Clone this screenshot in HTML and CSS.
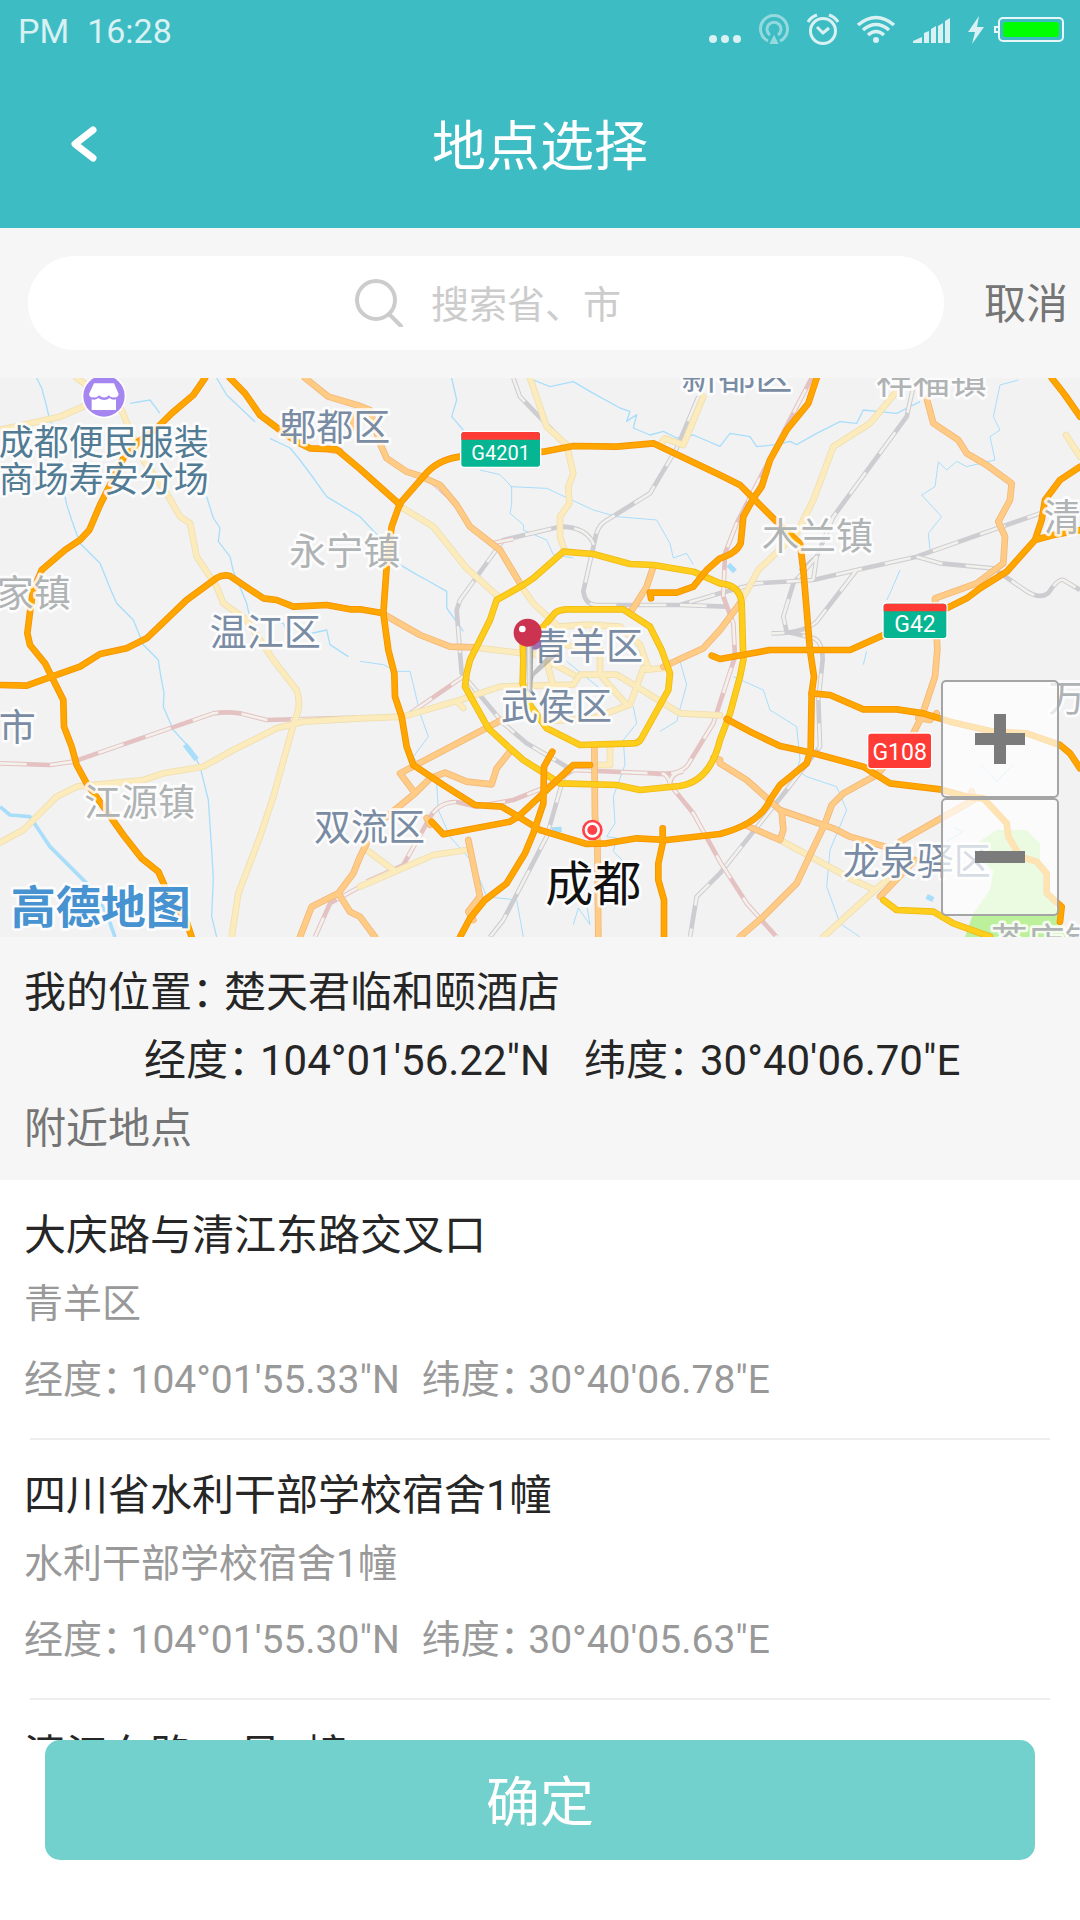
FILE: index.html
```html
<!DOCTYPE html>
<html lang="zh-CN">
<head>
<meta charset="utf-8">
<meta name="viewport" content="width=device-width, initial-scale=1">
<title>地点选择</title>
<link rel="stylesheet" href="styles.css">
</head>
<body>
<div class="app">
  <header class="header">
    <div class="status">
      <div class="status-time"><span>PM</span><span>16:28</span></div>
      <svg class="status-icons" viewBox="706 10 360 40" aria-hidden="true">
        <g fill="#d9f1f3">
          <circle cx="713" cy="39" r="4"/><circle cx="725" cy="39" r="4"/><circle cx="737" cy="39" r="4"/>
          <circle cx="876" cy="40" r="3"/>
          <path d="M913 43v-2l9-4v6zM924 43V33l5-2v12zM931 43V29l5-3v17zM938 43V26l5-3v20zM945 43V21l5-3v25zM979 16l-11 16h7l-3 12 12-17h-7z"/>
        </g>
        <g fill="none" stroke="#d9f1f3" stroke-width="3">
          <g opacity=".55"><path d="M768 41a13.500 13.500 0 1 1 12 0M770 35a7 7 0 1 1 8 0"/><path d="M774 37l3 6h-6z" fill="#d9f1f3" stroke-width="2"/></g>
          <circle cx="823" cy="31" r="12.500"/><path d="M817 27l6 6 6-5M808 22q3-5 9-7M829 15q6 2 9 7"/>
          <path stroke-width="3.500" d="M858 25q18-15 36 0M863 30q13-11 26 0M868 35q8-7 16 0"/>
        </g>
        <rect x="999" y="18" width="64" height="23" rx="4" fill="none" stroke="#e8f7f8" stroke-width="2"/>
        <path d="M998 27h-3v5h3" fill="none" stroke="#e8f7f8" stroke-width="2"/>
        <rect x="1003" y="22" width="56" height="15" rx="3" fill="#0f0"/>
      </svg>
    </div>
    <div class="nav">
      <button class="back" type="button" aria-label="返回"><svg viewBox="0 0 26 36" aria-hidden="true"><path d="M22 4L4 18l18 14" fill="none" stroke="#fff" stroke-width="7" stroke-linecap="round" stroke-linejoin="round"/></svg></button>
      <h1 class="title">地点选择</h1>
    </div>
  </header>

  <form class="search" role="search">
    <label class="search-box">
      <svg class="search-icon" viewBox="0 0 48 48" aria-hidden="true"><circle cx="21" cy="21" r="19" fill="none" stroke="#ccc" stroke-width="4"/><path d="M34 35l12 12" stroke="#ccc" stroke-width="4" stroke-linecap="round"/></svg>
      <input class="search-input" type="text" placeholder="搜索省、市" aria-label="搜索省、市">
    </label>
    <button class="cancel" type="button">取消</button>
  </form>

  <div class="map">
    <svg class="map-art" viewBox="0 0 3240 1677" preserveAspectRatio="xMidYMid slice" role="img" aria-label="成都地图">
      <defs>
        <linearGradient id="stem"><stop offset="0" stop-color="#aaa"/><stop offset=".4" stop-color="#eee"/><stop offset="1" stop-color="#888"/></linearGradient>
        <g id="rail-grey">
          <path d="M1540 0L1560 56L1690 191M2095 56L2030 211L1950 346L1815 430Q1790 446 1784 490L1750 640Q1755 681 1790 681L2040 681L2160 646L2270 616L2440 606L2570 576L2750 536L3120 406M2040 681L2180 686"/>
          <path d="M1782 500Q1760 446 1680 446L1510 486L1380 666L1370 696L1385 886L1510 1036L1580 1096L1700 1166L1640 1376L1510 1626L1470 1677"/>
          <path d="M2740 26L2720 116L2500 416L2450 536L2380 616L2350 716L2360 761L2440 780Q2468 790 2468 846L2455 966L2460 1106L2360 1236L2260 1361L2160 1486L2090 1556L2070 1677M2440 606L2450 536L2400 580"/>
          <path d="M2570 576L2450 731Q2410 766 2315 766M2750 536L2820 556L2980 571L3080 640Q3120 665 3145 645Q3175 600 3190 606L3240 636"/>
        </g>
        <g id="rail-pink">
          <path d="M0 1156L150 1161L220 1151L640 1006Q680 1000 720 1006L800 1026L1080 1019M1230 1006L1390 896M1480 495L1540 483M1300 315L1350 360"/>
          <path d="M1100 1511L1210 1461L1280 1336Q1310 1270 1370 1272L1430 1286L1540 1266L1640 1226L1720 1176L1960 1186Q2050 1195 2070 1150L2140 1036L2205 836L2200 736L2170 656L2175 526L2210 436L2390 86L2435 0"/>
          <path d="M1985 1186Q2005 1190 2010 1220L2080 1306L2160 1451L2240 1576L2330 1677M2050 1180Q2010 1185 2010 1220M1080 1526L990 1576L945 1677"/>
        </g>
        <g id="roads-cream">
          <path d="M0 156L180 116L250 86M230 0L260 21M365 96L385 146L430 246L500 346L540 416L570 436L590 536L650 626L670 676L740 726L820 846L890 936Q900 966 895 996L880 1041L820 1256L780 1376L715 1546L695 1677"/>
          <path d="M0 1394L70 1356L170 1256L230 1226L430 1206L490 1186L610 1166L700 1116L830 1051L910 1031L1080 1021L1210 1016L1380 966L1500 926L1720 920L1740 890L1850 890L1900 920L2040 1006L2160 1012"/>
          <path d="M1210 391L1300 446L1400 571L1495 656M1590 0L1640 146L1700 201L1720 286L1705 326L1708 376L1680 416L1680 476L1695 521M1565 626L1600 676L1675 746L1760 740L1860 746L1920 800L1945 870M1420 808L1570 826"/>
          <path d="M2110 56L2050 201L1995 181L1980 201M2685 46L2610 136L2500 206L2440 366L2390 466L2275 576L2220 676M3198 171L3240 236M1100 1416L1180 1476M1080 1526L1300 1431L1400 1416M2340 1386L2560 1506L2625 1536L2660 1506M2625 1536L2470 1677"/>
          <path d="M1800 816L1800 890L1880 980M1930 870L1890 980L1780 1020L1640 1030M1640 850L1660 925M1600 826L1720 890M1830 1110L1830 1161L1790 1161M1650 790L1740 810L1800 740M1940 875L1995 870M1370 970L1390 990"/>
        </g>
        <g id="roads-light">
          <path d="M915 0L985 56L1080 84L1110 96L1140 196L1160 241L1220 281L1260 294L1320 321L1370 381L1410 446L1500 516L1560 616M1155 711L1260 771L1350 806L1420 808M1960 566L1940 626L1890 706M2220 676L2160 756L2110 811L2040 843L1990 866"/>
          <path d="M1505 1026L1200 1186L1245 1246L1160 1316M1245 1246L1290 1201L1335 1184L1400 1211L1475 1219L1490 1171L1530 1121M1783 1106L1785 1316L1792 1376L1795 1677M1405 1386L1440 1556L1405 1601L1420 1626M1100 1396L1080 1436L1060 1486L1015 1546L935 1586L900 1677M1015 1546L1050 1601L1080 1616L1125 1677M1280 1320L1290 1340"/>
          <path d="M2780 61L2800 136L2875 186L2900 226L2960 261L3035 316L3030 366L2995 431L3015 476L3010 556L2930 616L2805 661L2812 816L2805 896L2765 1016L2740 1066L2630 1191L2530 1246L2495 1281L2475 1336L2390 1516L2290 1616L2220 1676"/>
          <path d="M2160 1156L2240 1206L2340 1296L2500 1351L2550 1376L2655 1406M2235 1341L2340 1386L2350 1356L2345 1301M2640 1556L2745 1446M2700 1391L2920 1266L2915 1240M2755 1020L2790 1026L2810 1006M1060 110L1060 150M990 215L1020 220M2160 1146L2140 1140"/>
        </g>
        <g id="roads-yellow">
          <path d="M1690 521L1780 528L1890 558L1960 561L2080 581L2160 616Q2220 620 2225 676L2230 846L2220 896L2190 1006L2160 1086Q2130 1210 2040 1224L1920 1236L1850 1221L1680 1216L1570 1146L1530 1111L1465 1051L1395 926L1400 886L1410 846L1470 726L1490 666L1570 621L1600 601Z"/>
          <path d="M1570 846L1568 790L1630 746L1665 705Q1675 696 1700 694L1870 694L1950 746L1985 816L2010 886L2005 936L1925 1080Q1917 1096 1900 1096L1740 1101L1640 1051L1590 981L1568 916ZM2650 1566L2690 1596L2800 1601L2860 1636L2970 1676"/>
        </g>
        <g id="roads-orange">
          <path d="M615 0L580 51L515 106L470 151L415 191L370 241L330 321L300 381L268 456L240 486L195 516L125 576L100 636L92 686L82 766L90 801L135 856L155 896L190 966L192 1046L215 1106L230 1161L260 1216L310 1286L370 1371L425 1441L475 1481L495 1526L515 1576L555 1616L575 1677"/>
          <path d="M0 921L80 923L155 896L240 866L300 828L380 811L440 781L560 666L650 600Q670 588 690 594L790 661L830 666L880 686L980 681L1050 694L1080 694L1150 706M690 0L735 46L780 111L840 156L890 191L930 211L1010 214L1080 273L1200 380"/>
          <path d="M1200 376L1270 296Q1310 245 1380 236L1500 234L1630 221L1720 204L1850 206L1960 196L2160 291L2220 321L2260 361L2330 431L2400 496L2410 576L2430 816L2442 896L2435 946L2432 1116L2420 1156L2340 1221L2310 1266Q2280 1336 2160 1368L2000 1386L1910 1381L1820 1396L1760 1398L1620 1356L1555 1316L1505 1286L1425 1281L1330 1221L1240 1161L1220 1106L1205 1016L1185 956L1183 886L1165 816L1150 706L1160 566L1175 446Z"/>
          <path d="M2450 0L2425 76L2360 156L2310 246L2285 326L2260 361L2230 416L2222 496Q2210 526 2160 541L2120 576L2080 626L2030 644L1950 644L1953 661M3155 0L3195 51L3240 116"/>
          <path d="M3240 266L3180 306L3135 366L3125 426L3105 486L3060 536L3020 581L2940 631L2900 661L2840 691L2640 776L2550 816L2310 816L2160 843L2135 833M3105 486L3160 471L3240 456"/>
          <path d="M2435 946L2490 951L2590 994L2690 994L2770 1006L2850 1031L2980 1061L3080 1066L3180 1101L3210 1126L3240 1171M2180 1023L2260 1066L2340 1104L2435 1124L2590 1166L2670 1216L2820 1234L2900 1256L2950 1261L3020 1336L3025 1376L3060 1436L3110 1451L3140 1486L3140 1546L3185 1586L3180 1631"/>
          <path d="M1657 1121L1632 1166L1630 1276L1600 1366L1575 1426L1520 1516L1455 1566L1410 1621L1380 1677M1770 1161L1720 1161L1555 1316L1530 1331L1330 1369L1295 1331M1988 1351L1988 1396L1975 1456L1975 1506L1992 1566L1992 1677"/>
        </g>
      </defs>

      <rect width="3240" height="1677" fill="#f2f2f3"/>
      <path d="M2930 1396L2990 1356L3080 1356L3120 1396L3120 1456L3170 1596L3200 1677L2895 1677L2920 1606L2970 1536L2980 1480L2940 1440Z" fill="#bdf09b"/>

      <g fill="none" stroke="#a9defb" stroke-width="4" stroke-linejoin="round">
        <path d="M110 0L125 30L140 86L150 130L172 156L180 276L200 380L215 426L240 496L300 556L330 630L350 676L400 726L430 800L475 846L480 880L492 946L490 986L520 1056L575 1116L600 1166L625 1266L635 1416L640 1500L635 1616L650 1677"/>
        <path d="M650 0L680 51L765 131M810 181L870 210L900 246L940 300L980 356L1080 416L1160 500L1200 560L1250 590L1280 606L1340 640L1340 690L1390 760M390 76L450 66L480 106M620 356L640 420L660 450L655 490L690 536L700 580L740 676L750 720L850 736L870 780L980 756L990 800L1045 836"/>
        <path d="M1355 0L1370 66L1355 116L1390 156M1600 6L1650 26L1720 11L1780 46L1860 90L1890 100L1880 130L1910 110L1900 150L1950 171L1990 160L2030 180L2080 171L2160 205L2190 166L2250 176L2270 206L2330 200L2370 190L2390 200L2450 166L2520 131L2570 136L2590 96L2690 106L2760 71"/>
        <path d="M1440 276L1500 290L1535 326L1535 380L1530 406L1570 440L1570 456L1640 486L1660 530L1720 540M1530 326L1640 331L1780 396L1850 416L1970 426L2010 496L2020 540L2060 526L2080 560M3055 6L3000 21L2980 116L3000 156L2970 176L2985 246L2900 266L2870 250L2840 276L2815 251L2805 326L2765 351L2825 416L2785 466L2790 516M2700 576L2670 646L2660 666" stroke-width="3"/>
        <path d="M1700 850L1810 940L1860 950L1900 986L1910 1036L1870 1086L1875 1160L1840 1256L1845 1336L1820 1376L1850 1380L1840 1420L1870 1450M1080 850L1150 860L1190 880L1230 880L1240 920L1260 1006L1285 1076L1240 1136L1270 1180L1310 1216L1315 1296L1350 1376L1420 1456L1460 1556L1550 1566L1570 1677M1720 1640L1735 1590L1770 1640L1760 1580L1810 1540M2040 850L2060 920L2030 1030L1980 1060" stroke-width="3"/>
        <path d="M2200 896L2290 936L2310 996L2390 1046L2400 1146L2390 1176L2420 1196L2510 1226L2540 1296L2490 1416L2480 1526L2520 1636L2580 1677M2940 1160L2990 1210L3040 1160M2840 1390L2890 1360L2860 1350M2600 820L2590 860" stroke-width="3"/>
        <path d="M0 1286L30 1311L90 1316L150 1406L270 1526L320 1606L345 1677" stroke-width="11"/>
        <path d="M555 1100L590 1145M2185 560L2205 580M2780 1555L2800 1565M1655 1356L1685 1354" stroke-width="16"/>
      </g>

      <use href="#rail-grey" class="rail rail-grey"/><use href="#rail-grey" class="rail rail-gap"/>
      <use href="#rail-pink" class="rail rail-pink"/><use href="#rail-pink" class="rail rail-gap"/>
      <use href="#roads-cream" class="road cream-edge"/><use href="#roads-cream" class="road road-fill cream"/>
      <use href="#roads-light" class="road light-edge"/><use href="#roads-light" class="road road-fill light"/>
      <use href="#roads-yellow" class="road yellow-edge"/><use href="#roads-yellow" class="road road-fill yellow"/>
      <use href="#roads-orange" class="road orange-edge"/><use href="#roads-orange" class="road road-fill orange"/>

      <g class="place district">
        <text x="838" y="188">郫都区</text><text x="629" y="805">温江区</text><text x="2044" y="37">新都区</text>
        <text x="1596" y="845">青羊区</text><text x="1503" y="1026">武侯区</text><text x="-4" y="1090">市</text>
        <text x="942" y="1388">双流区</text><text x="2528" y="1491">龙泉驿区</text>
      </g>
      <g class="place town">
        <text x="868" y="561">永宁镇</text><text x="-10" y="686">家镇</text><text x="2627" y="47">祥福镇</text>
        <text x="2286" y="517">木兰镇</text><text x="3131" y="458">清</text><text x="252" y="1313">江源镇</text>
        <text x="3145" y="1001">万</text><text x="2972" y="1730">茶店镇</text>
      </g>
      <g class="place shop"><text x="-4" y="232">成都便民服装</text><text x="-4" y="343">商场寿安分场</text></g>
      <text class="place city" x="1636" y="1568">成都</text>
      <text class="place brand" x="32" y="1638">高德地图</text>

      <circle cx="312" cy="54" r="67" fill="#fff"/><circle cx="312" cy="54" r="62" fill="#a585f0"/>
      <path d="M282 16h60l14 32q-2 12-15 10q-10 2-14-6q-14 13-30 0q-8 9-16 6q-13 2-14-10zM275 64q10 4 20-4q18 12 34 0q8 8 19 4v32h-73z" fill="#fff"/>

      <g stroke="#fff" stroke-width="8" paint-order="stroke">
        <rect x="1384" y="162" width="236" height="104" rx="8" fill="#06b592"/>
        <rect x="2651" y="677" width="188" height="103" rx="8" fill="#06b592"/>
        <rect x="2605" y="1067" width="188" height="103" rx="8" fill="#ff3b36"/>
      </g>
      <path d="M1384 185v-15q0-8 8-8h220q8 0 8 8v15zM2651 700v-15q0-8 8-8h172q8 0 8 8v15z" fill="#ff3b36"/>
      <g class="shield"><text class="shield-small" x="1502" y="245">G4201</text><text x="2745" y="762">G42</text><text x="2699" y="1146">G108</text></g>

      <circle cx="1777" cy="1356" r="27" fill="#fff" stroke="#ff4248" stroke-width="8"/><circle cx="1777" cy="1356" r="15" fill="#ff4248"/>

      <path d="M1588 940L1602 895L1680 825L1640 835L1600 880Z" fill="#777" opacity=".4"/>
      <circle cx="1605" cy="796" r="19" fill="#8a5aa8" opacity=".85"/>
      <path d="M1577 800h23l-3 138q-8 14-15 0z" fill="url(#stem)" opacity=".9"/>
      <circle cx="1583" cy="764" r="42" fill="#cc3350"/><circle cx="1567" cy="753" r="10" fill="#fff"/>
    </svg>
    <div class="zoom">
      <button class="zoom-btn" type="button" aria-label="放大"><svg viewBox="0 0 50 50" aria-hidden="true"><path d="M0 25h50M25 0v50" stroke="#7b7b7b" stroke-width="12"/></svg></button>
      <button class="zoom-btn" type="button" aria-label="缩小"><svg viewBox="0 0 50 50" aria-hidden="true"><path d="M0 25h50" stroke="#7b7b7b" stroke-width="12"/></svg></button>
    </div>
  </div>

  <section class="info">
    <p class="row"><span class="key">我的位置：</span><span>楚天君临和颐酒店</span></p>
    <p class="row row-coords"><span class="key">经度：</span><span class="value">104°01'56.22"N</span><span class="key">纬度：</span><span>30°40'06.70"E</span></p>
    <h2 class="row nearby">附近地点</h2>
  </section>

  <ul class="list">
    <li class="item">
      <h3 class="name">大庆路与清江东路交叉口</h3>
      <p class="area">青羊区</p>
      <p class="coords"><span class="key">经度：</span><span class="value">104°01'55.33"N</span><span class="key">纬度：</span><span>30°40'06.78"E</span></p>
    </li>
    <li class="item">
      <h3 class="name">四川省水利干部学校宿舍1幢</h3>
      <p class="area">水利干部学校宿舍1幢</p>
      <p class="coords"><span class="key">经度：</span><span class="value">104°01'55.30"N</span><span class="key">纬度：</span><span>30°40'05.63"E</span></p>
    </li>
    <li class="item">
      <h3 class="name">清江东路35号1幢</h3>
    </li>
  </ul>

  <footer class="footer"><button class="confirm" type="button">确定</button></footer>
</div>
</body>
</html>
```
FILE: styles.css
```css
* { box-sizing: border-box; }

body, h1, h2, h3, p, ul { margin: 0; padding: 0; font-weight: 400; }

body, button, input {
  font-family: Roboto, "Noto Sans CJK SC", sans-serif;
}

body { background: #fff; color: #262626; font-size: 42px; }

button { border: 0; padding: 0; background: none; cursor: pointer; }

svg { display: block; }

.app { display: flex; flex-direction: column; height: 100vh; }

/* Header */
.header { flex: none; background: #3ebcc4; color: #fff; }
.status {
  display: flex; align-items: center; justify-content: space-between;
  height: 60px; padding: 0 14px 0 18px;
}
.status-time { display: flex; gap: 18px; color: #d9f1f3; font-size: 34px; line-height: 60px; padding-top: 2px; }
.status-icons { width: 360px; height: 40px; }
.nav {
  display: grid; grid-template-columns: 168px 1fr 168px; align-items: center;
  height: 168px;
}
.back { display: flex; justify-content: center; align-items: center; height: 120px; }
.back svg { width: 26px; height: 36px; }
.title { padding-top: 8px; text-align: center; font-size: 54px; line-height: 80px; }

/* Search */
.search {
  flex: none; display: flex; align-items: center; gap: 40px;
  padding: 28px 12px 28px 28px; background: #f6f6f6;
}
.search-box {
  flex: 1; display: flex; align-items: center; justify-content: center; gap: 28px;
  height: 94px; padding-left: 6px; border-radius: 47px; background: #fff;
}
.search-icon { width: 48px; height: 48px; }
.search-input {
  width: 192px; padding: 4px 0 0; border: 0; outline: 0; background: none;
  color: #262626; font-size: 38px; line-height: 60px;
}
.search-input::placeholder { color: #ccc; opacity: 1; }
.cancel { padding-top: 4px; color: #757575; font-size: 42px; line-height: 60px; }

/* Map */
.map { flex: none; position: relative; aspect-ratio: 1080 / 559; overflow: hidden; background: #f2f2f3; }
.map-art { width: 100%; height: 100%; }
.rail, .road { fill: none; stroke-linejoin: round; }
.rail { stroke-width: 14; }
.rail-grey { stroke: #cdccd1; }
.rail-pink { stroke: #e4c2c2; }
.rail-gap { stroke: #f3f1ec; stroke-width: 8; stroke-dasharray: 80 70; }
.road { stroke-width: 20; stroke-linecap: round; }
.road-fill { stroke-width: 15; }
.cream-edge { stroke: #efdfb0; }
.cream { stroke: #fbebbd; }
.light-edge { stroke: #f2b877; }
.light { stroke: #ffcb85; }
.yellow-edge { stroke: #efb814; }
.yellow { stroke: #ffcd1c; }
.orange-edge { stroke: #f59300; }
.orange { stroke: #ffa600; }
.place { font-size: 111px; stroke: #fff; stroke-opacity: .85; stroke-width: 16; stroke-linejoin: round; paint-order: stroke; }
.district { fill: #7a8ca4; }
.town { fill: #afb3b4; }
.shop { fill: #527b94; font-size: 105px; }
.city { fill: #111; font-size: 144px; }
.brand { fill: #4793d1; font-size: 135px; font-weight: 700; }
.shield { fill: #fff; font-size: 69px; text-anchor: middle; }
.shield-small { font-size: 60px; }

.zoom { position: absolute; right: 21px; bottom: 21px; display: grid; }
.zoom-btn {
  display: grid; place-items: center; width: 118px; height: 118px;
  border: 2px solid #a5a5a5; border-radius: 5px; background: rgba(255, 255, 255, .7);
}
.zoom-btn svg { width: 50px; height: 50px; }

/* Current location */
.info { flex: none; padding: 22px 24px 17px; background: #f6f6f6; }
.row { font-size: 42px; line-height: 68px; }
.row-coords { padding-left: 120px; }
.row-coords .value { margin-right: 34px; }
.nearby { color: #757575; }
.key { margin-right: 11px; font-feature-settings: "halt"; }

/* Nearby places */
.list { flex: 1; min-height: 0; overflow: hidden; list-style: none; }
.item { margin: 0 30px 0 24px; padding-top: 22px; line-height: 68px; }
.item::after { content: ""; display: block; height: 2px; margin: 24px 0 0 6px; background: #eee; }
.name { font-size: 42px; }
.area, .coords { color: #999; font-size: 39px; }
.coords { margin-top: 8px; }
.coords .key { margin-right: 9px; }
.coords .value { margin-right: 22px; }

.footer { flex: none; padding: 0 45px 60px; }
.confirm {
  display: block; width: 100%; height: 120px; padding-bottom: 4px; border-radius: 15px;
  background: #72d1cd; color: #fff; font-size: 54px;
}
```
